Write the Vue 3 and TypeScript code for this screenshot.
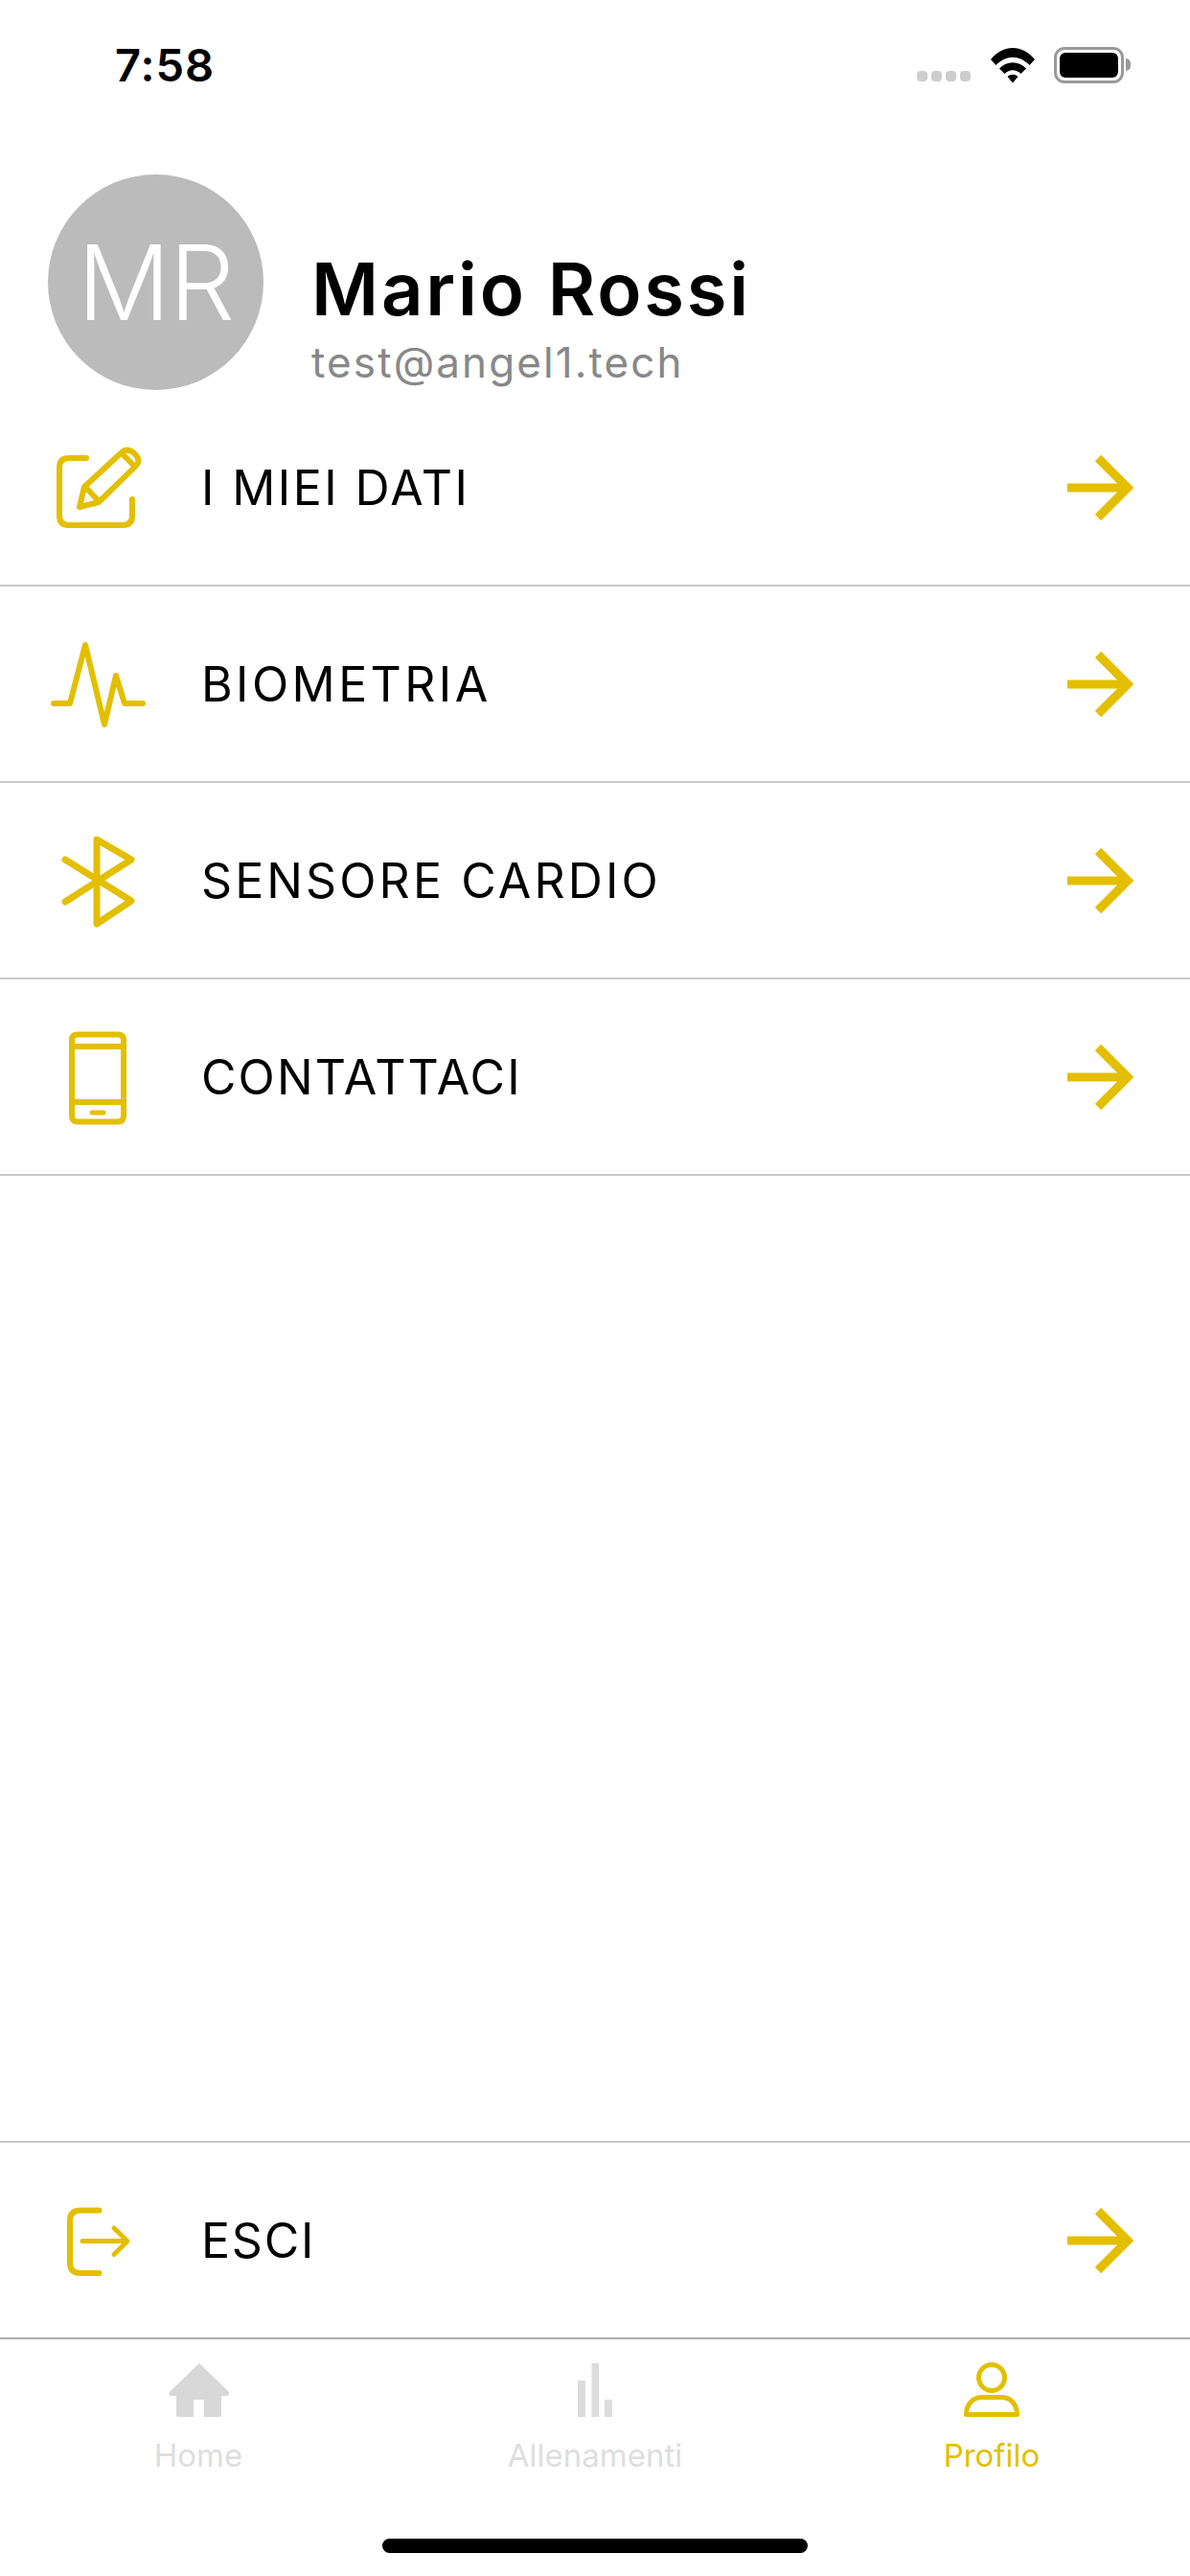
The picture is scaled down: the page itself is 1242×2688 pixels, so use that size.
<template>
  <div class="page">
    <div class="status-bar">
      <span class="time">7:58</span>
      <div class="status-icons">
        <div class="signal"><i v-for="n in 4" :key="n" /></div>
        <svg class="wifi" width="48" height="38" viewBox="0 0 48 38">
          <path d="M1 13 C14 -3 34 -3 47 13 L41.500 19 C31 8 17 8 6.500 19 Z" fill="#000" />
          <path d="M10 22.500 C18 14 30 14 38 22.500 L32.500 28 C27 23 21 23 15.500 28 Z" fill="#000" />
          <path d="M18.500 31 C21.500 28 26.500 28 29.500 31 L24 37.500 Z" fill="#000" />
        </svg>
        <div class="battery"><div class="battery-fill" /></div>
        <div class="battery-nub" />
      </div>
    </div>

    <header class="profile">
      <div class="avatar">MR</div>
      <div class="profile-text">
        <h1 class="name">Mario Rossi</h1>
        <p class="email">test@angel1.tech</p>
      </div>
    </header>

    <nav class="menu">
      <div v-for="item in menuItems" :key="item.label" class="row" :class="{ bottom: item.bottom }">
        <svg class="row-icon" width="120" height="120" viewBox="0 0 120 120" fill="none" stroke="#e3bf00" stroke-linecap="round" stroke-linejoin="round">
          <path v-for="p in item.paths" :key="p.d" :d="p.d" :stroke-width="p.width" />
        </svg>
        <span class="row-label" :style="{ letterSpacing: item.spacing }">{{ item.label }}</span>
        <svg class="row-arrow" width="80" height="80" viewBox="0 0 80 80" fill="none" stroke="#e3bf00" stroke-width="9">
          <path d="M6 40 H70" />
          <path d="M38 9 L69 40 L38 71" />
        </svg>
      </div>
    </nav>

    <footer class="tabbar">
      <div class="tab">
        <svg width="80" height="60" viewBox="0 0 80 60">
          <path d="M41 2 L72 32 Q73 36 70 36 H64 V56 Q64 58 62 58 H46 V40 H35 V58 H20 Q17 58 17 56 V36 H12 Q8 36 10 32 Z" fill="#d8d8d8" />
        </svg>
        <span>Home</span>
      </div>
      <div class="tab">
        <svg width="80" height="60" viewBox="0 0 80 60" fill="#dcdcdc">
          <rect x="22" y="20" width="8" height="38" />
          <rect x="36.500" y="2" width="7.500" height="56" />
          <rect x="50" y="40" width="8" height="18" />
        </svg>
        <span>Allenamenti</span>
      </div>
      <div class="tab active">
        <svg width="80" height="60" viewBox="0 0 80 60" fill="none" stroke="#e3bf00" stroke-width="5" stroke-linejoin="round">
          <circle cx="40" cy="17" r="13.500" />
          <path d="M13.500 55.500 H66.500 C66.500 44 59 37.500 50 37.500 H30 C21 37.500 13.500 44 13.500 55.500 Z" />
        </svg>
        <span>Profilo</span>
      </div>
      <div class="home-indicator" />
    </footer>
  </div>
</template>

<script setup lang="ts">
interface IconPath {
  d: string
  width: number
}

interface MenuItem {
  label: string
  spacing: string
  bottom?: boolean
  paths: IconPath[]
}

const menuItems: MenuItem[] = [
  {
    label: 'I MIEI DATI',
    spacing: '2.4px',
    paths: [
      { d: 'M50 29 H32 Q22 29 22 39 V89 Q22 99 32 99 H88 Q98 99 98 89 V72', width: 6 },
      { d: 'M43 80 L48 59 L86 24 Q92 18 99 23 L102 26 Q107 32 102 37 L63 75 Z', width: 6 },
      { d: 'M87 24 L100 37', width: 6 },
      { d: 'M49 59 L63 74', width: 6 }
    ]
  },
  {
    label: 'BIOMETRIA',
    spacing: '3.4px',
    paths: [{ d: 'M16 80 H33 L49 19 L69 102 L81 51 L90 80 H109', width: 6 }]
  },
  {
    label: 'SENSORE CARDIO',
    spacing: '3.1px',
    paths: [{ d: 'M28 38 L97 81 L61 105 V17 L97 38 L28 82', width: 7 }]
  },
  {
    label: 'CONTATTACI',
    spacing: '2.1px',
    paths: [
      { d: 'M41 15.500 H83 Q89 15.500 89 21.500 V100.500 Q89 106.500 83 106.500 H41 Q35 106.500 35 100.500 V21.500 Q35 15.500 41 15.500 Z', width: 6 },
      { d: 'M35 28 H89', width: 6 },
      { d: 'M35 86 H89', width: 6 },
      { d: 'M56 97 H68', width: 5 }
    ]
  },
  {
    label: 'ESCI',
    spacing: '1.8px',
    bottom: true,
    paths: [
      { d: 'M63.500 28.500 H44 Q33 28.500 33 39 V83 Q33 94 44 94 H63.500', width: 6 },
      { d: 'M46 60.500 H92', width: 5 },
      { d: 'M79 47 L93 60.500 L79 74.500', width: 5 }
    ]
  }
]
</script>

<style>
html,
body {
  margin: 0;
  background: #fff;
}
</style>

<style scoped>
.page {
  width: 1242px;
  height: 2688px;
  display: flex;
  flex-direction: column;
  background: #fff;
  font-family: Inter, "Liberation Sans", sans-serif;
  color: #000;
}

.status-bar {
  height: 132px;
  flex: none;
  display: flex;
  justify-content: space-between;
  align-items: flex-start;
  padding: 39px 62px 0 120px;
  box-sizing: border-box;
}

.time {
  font-size: 47px;
  line-height: 58px;
  font-weight: 600;
  letter-spacing: 1px;
}

.status-icons {
  display: flex;
  align-items: flex-start;
  padding-top: 10px;
}

.signal {
  display: flex;
  gap: 4px;
  margin: 25px 20px 0 0;
}

.signal i {
  width: 11px;
  height: 11px;
  border-radius: 4px;
  background: #cdcdcd;
}

.wifi {
  margin-right: 19px;
}

.battery {
  width: 73px;
  height: 38px;
  box-sizing: border-box;
  border: 3.500px solid #999;
  border-radius: 11px;
  padding: 3px;
}

.battery-fill {
  height: 100%;
  background: #000;
  border-radius: 6px;
}

.battery-nub {
  width: 5px;
  height: 13px;
  margin: 12px 0 0 2px;
  background: #999;
  border-radius: 0 5px 5px 0;
}

.profile {
  flex: none;
  display: flex;
  align-items: center;
  gap: 50px;
  height: 225px;
  margin-top: 50px;
  padding-left: 50px;
}

.avatar {
  width: 225px;
  height: 225px;
  flex: none;
  border-radius: 50%;
  background: #bbb;
  color: #fff;
  display: flex;
  align-items: center;
  justify-content: center;
  font-size: 108px;
  font-weight: 300;
  letter-spacing: -1px;
}

.profile-text {
  padding-top: 70px;
}

.name {
  margin: 0;
  font-size: 76px;
  line-height: 90px;
  font-weight: 600;
  letter-spacing: 2.800px;
  white-space: nowrap;
}

.email {
  margin: 6px 0 0;
  color: #888;
  font-size: 44px;
  line-height: 52px;
  letter-spacing: 2.100px;
  white-space: nowrap;
}

.menu {
  flex: 1;
  display: flex;
  flex-direction: column;
}

.row {
  height: 205px;
  flex: none;
  box-sizing: border-box;
  display: flex;
  align-items: center;
  padding: 0 54px 0 40px;
  border-bottom: 2px solid #c9c9c9;
}

.row.bottom {
  margin-top: auto;
  border-top: 2px solid #c9c9c9;
  border-bottom: none;
}

.row-icon {
  flex: none;
  margin-right: 50px;
}

.row-label {
  font-size: 50px;
  line-height: 60px;
  white-space: nowrap;
}

.row-arrow {
  flex: none;
  margin-left: auto;
}

.tabbar {
  position: relative;
  flex: none;
  height: 249px;
  box-sizing: border-box;
  border-top: 2px solid #acacac;
  display: flex;
  align-items: flex-start;
  padding-top: 23px;
}

.tab {
  flex: 1;
  display: flex;
  flex-direction: column;
  align-items: center;
  gap: 18px;
  color: #dedede;
  font-size: 33px;
  line-height: 40px;
}

.tab svg {
  display: block;
}

.tab.active {
  color: #e3bf00;
}

.home-indicator {
  position: absolute;
  left: 399px;
  top: 208px;
  width: 444px;
  height: 15px;
  border-radius: 8px;
  background: #000;
}
</style>
